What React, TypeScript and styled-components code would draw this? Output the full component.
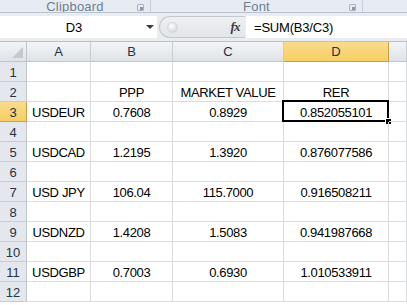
import styled, { createGlobalStyle } from 'styled-components';

const GlobalStyle = createGlobalStyle`
  html, body {
    margin: 0;
    padding: 0;
    width: 407px;
    height: 305px;
    overflow: hidden;
    background: #ffffff;
    font-family: "Liberation Sans", Arial, sans-serif;
  }
`;

const Window = styled.div`
  display: flex;
  flex-direction: column;
  width: 407px;
  height: 305px;
  overflow: hidden;
  background: #e9edf2;
`;

const GroupBar = styled.div`
  display: flex;
  height: 12px;
  overflow: hidden;
  background: #e7ecf2;
  border-bottom: 1px solid #b7c2cf;
`;

const Group = styled.div<{ $w: number }>`
  position: relative;
  flex: 0 0 ${(p) => p.$w}px;
  display: flex;
  align-items: flex-end;
  justify-content: center;
  border-right: 1px solid #c6cfda;
  box-sizing: border-box;
`;

const GroupLabel = styled.span`
  font-size: 13px;
  line-height: 16px;
  margin-bottom: -3px;
  color: #6f7e91;
  letter-spacing: 0.2px;
`;

const Launcher = styled.span`
  position: absolute;
  right: 6px;
  bottom: 1px;
  width: 7px;
  height: 7px;
  border: 1px solid #aab4c1;
  box-sizing: border-box;
  border-radius: 1px;
  &::after {
    content: '';
    position: absolute;
    right: 0;
    bottom: 0;
    width: 3px;
    height: 3px;
    background: #8c97a5;
  }
`;

const FormulaRow = styled.div`
  display: flex;
  height: 22px;
  margin-top: 3px;
  align-items: stretch;
`;

const NameBox = styled.div`
  flex: 0 0 157px;
  display: flex;
  align-items: center;
  background: #ffffff;
  font-size: 13px;
  color: #000;
  box-sizing: border-box;
  position: relative;
`;

const NameText = styled.span`
  flex: 1;
  text-align: center;
  padding-left: 2px;
  padding-top: 1px;
`;

const DropArrow = styled.span`
  width: 0;
  height: 0;
  margin-right: 3px;
  border-left: 4px solid transparent;
  border-right: 4px solid transparent;
  border-top: 4px solid #3a3a3a;
`;

const Grip = styled.div`
  flex: 0 0 66px;
  display: flex;
  align-items: center;
  margin-left: 2px;
  background: linear-gradient(#eef0f3, #e2e5e9);
  border: 1px solid #c3c8ce;
  border-right: none;
  border-radius: 11px 0 0 11px;
  box-sizing: border-box;
`;

const GripDot = styled.span`
  width: 9px;
  height: 9px;
  margin-left: 7px;
  border-radius: 50%;
  background: radial-gradient(circle at 40% 35%, #ffffff, #c7ccd2);
  border: 1px solid #d4d8dd;
`;

const FxBox = styled.div`
  flex: 0 0 20px;
  display: flex;
  align-items: center;
  justify-content: center;
  background: linear-gradient(#eef0f3, #e2e5e9);
  border-top: 1px solid #c3c8ce;
  border-bottom: 1px solid #c3c8ce;
  box-sizing: border-box;
  font-family: "Liberation Serif", "Times New Roman", serif;
  font-style: italic;
  font-weight: bold;
  font-size: 13px;
  color: #3b3b3b;
  letter-spacing: -1px;
`;

const FormulaInput = styled.div`
  flex: 1;
  display: flex;
  align-items: center;
  padding-left: 8px;
  padding-top: 1px;
  margin-left: 1px;
  background: #ffffff;
  font-size: 13px;
  letter-spacing: -0.2px;
  color: #000;
`;

const Spacer = styled.div`
  height: 4px;
  border-bottom: 1px solid #b7c2cf;
  box-sizing: border-box;
  background: #e9edf2;
`;

const Sheet = styled.div`
  display: grid;
  grid-template-columns: 27px 64px 82px 111px 105px 1fr;
  grid-auto-rows: 20px;
  grid-template-rows: 20px;
  background: #ffffff;
  flex: 1;
`;

const Corner = styled.div`
  position: relative;
  background: linear-gradient(#f2f4f7, #dfe3e8);
  border-right: 1px solid #c0c6cd;
  border-bottom: 1px solid #c0c6cd;
  box-sizing: border-box;
  &::after {
    content: '';
    position: absolute;
    right: 3px;
    bottom: 3px;
    width: 0;
    height: 0;
    border-left: 11px solid transparent;
    border-bottom: 11px solid #c4c9cf;
  }
`;

const ColHead = styled.div<{ $active?: boolean }>`
  display: flex;
  align-items: center;
  justify-content: center;
  font-size: 13px;
  color: #27313f;
  box-sizing: border-box;
  background: ${(p) =>
    p.$active ? 'linear-gradient(#f9db8c, #f6cf63)' : 'linear-gradient(#f3f5f8, #dfe3e8)'};
  border-right: 1px solid ${(p) => (p.$active ? '#d29b3e' : '#c8cdd3')};
  border-bottom: 1px solid ${(p) => (p.$active ? '#d29b3e' : '#c0c6cd')};
`;

const RowHead = styled.div<{ $active?: boolean }>`
  display: flex;
  align-items: center;
  justify-content: center;
  font-size: 13px;
  color: #27313f;
  box-sizing: border-box;
  padding-top: 1px;
  background: ${(p) => (p.$active ? 'linear-gradient(#f9db8c, #f6cf63)' : '#e4e8ee')};
  border-right: 1px solid ${(p) => (p.$active ? '#d29b3e' : '#c0c6cd')};
  border-bottom: 1px solid ${(p) => (p.$active ? '#d29b3e' : '#c8cdd3')};
`;

const Cell = styled.div<{ $selected?: boolean }>`
  position: relative;
  display: flex;
  align-items: center;
  justify-content: center;
  font-size: 13px;
  letter-spacing: -0.35px;
  color: #000;
  box-sizing: border-box;
  border-right: 1px solid #dadcdd;
  border-bottom: 1px solid #dadcdd;
  white-space: nowrap;
  padding-top: 1px;
  ${(p) =>
    p.$selected &&
    `
    &::before {
      content: '';
      position: absolute;
      left: -2px;
      top: -2px;
      right: -1px;
      bottom: -1px;
      border: 2px solid #000;
    }
    &::after {
      content: '';
      position: absolute;
      right: -4px;
      bottom: -4px;
      width: 5px;
      height: 5px;
      background: #000;
      border: 1px solid #fff;
    }
  `}
`;

const columns = ['A', 'B', 'C', 'D'];

const rows: (string[] | null)[] = [
  null,
  ['', 'PPP', 'MARKET VALUE', 'RER'],
  ['USDEUR', '0.7608', '0.8929', '0.852055101'],
  null,
  ['USDCAD', '1.2195', '1.3920', '0.876077586'],
  null,
  ['USD JPY', '106.04', '115.7000', '0.916508211'],
  null,
  ['USDNZD', '1.4208', '1.5083', '0.941987668'],
  null,
  ['USDGBP', '0.7003', '0.6930', '1.010533911'],
  null,
];

export default function App() {
  return (
    <>
      <GlobalStyle />
      <Window>
        <GroupBar>
          <Group $w={151}>
            <GroupLabel>Clipboard</GroupLabel>
            <Launcher />
          </Group>
          <Group $w={212}>
            <GroupLabel>Font</GroupLabel>
            <Launcher />
          </Group>
        </GroupBar>
        <FormulaRow>
          <NameBox>
            <NameText>D3</NameText>
            <DropArrow />
          </NameBox>
          <Grip>
            <GripDot />
          </Grip>
          <FxBox>fx</FxBox>
          <FormulaInput>=SUM(B3/C3)</FormulaInput>
        </FormulaRow>
        <Spacer />
        <Sheet>
          <Corner />
          {columns.map((c) => (
            <ColHead key={c} $active={c === 'D'}>
              {c}
            </ColHead>
          ))}
          <ColHead />
          {rows.map((r, i) => (
            <RowCells key={i} index={i + 1} values={r} />
          ))}
        </Sheet>
      </Window>
    </>
  );
}

function RowCells({ index, values }: { index: number; values: string[] | null }) {
  const vals = values ?? ['', '', '', ''];
  return (
    <>
      <RowHead $active={index === 3}>{index}</RowHead>
      {vals.map((v, j) => (
        <Cell key={j} $selected={index === 3 && j === 3}>
          {v}
        </Cell>
      ))}
      <Cell />
    </>
  );
}
